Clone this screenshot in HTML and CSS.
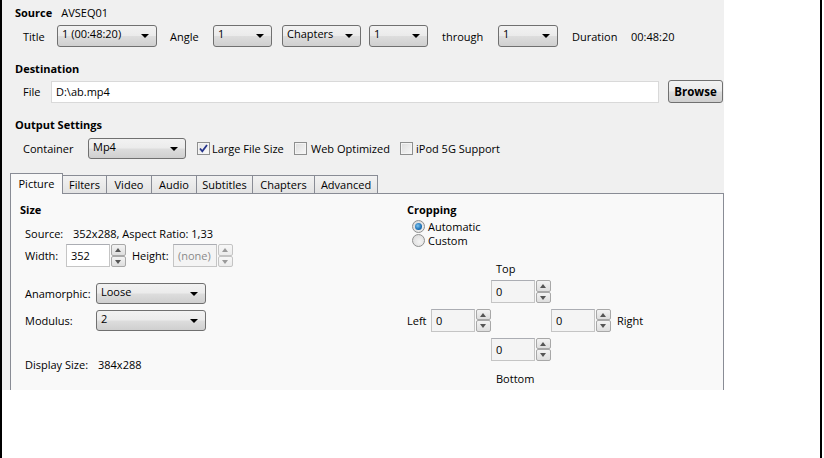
FILE: index.html
```html
<!DOCTYPE html>
<html>
<head>
<meta charset="utf-8">
<title>HandBrake</title>
<link rel="stylesheet" href="styles.css">
</head>
<body>
<div class="frame">
  <div class="edge-l"></div>
  <div class="content">
    <div class="app">
      <div class="row r-source"><span class="b">Source</span><span class="src-name">AVSEQ01</span></div>
      <div class="row r-title">
        <span class="lbl l-title">Title</span>
        <div class="combo w-title">1 (00:48:20)</div>
        <span class="lbl l-angle">Angle</span>
        <div class="combo w-angle">1</div>
        <div class="combo w-chap">Chapters</div>
        <div class="combo w-c1">1</div>
        <span class="lbl l-through">through</span>
        <div class="combo w-c2">1</div>
        <span class="lbl l-dur">Duration</span>
        <span>00:48:20</span>
      </div>
      <div class="row r-head1"><span class="b">Destination</span></div>
      <div class="row r-file">
        <span class="lbl l-file">File</span>
        <div class="textbox w-file">D:\ab.mp4</div>
        <div class="button w-browse">Browse</div>
      </div>
      <div class="row r-head2"><span class="b">Output Settings</span></div>
      <div class="row r-cont">
        <span class="lbl l-cont">Container</span>
        <div class="combo w-cont">Mp4</div>
        <span class="check checked c1"><svg viewBox="0 0 13 13" width="13" height="13"><path d="M3 6.5 L5.3 9.3 L10 3" fill="none" stroke="#26348b" stroke-width="1.8"/></svg></span>
        <span class="lbl l-lfs">Large File Size</span>
        <span class="check"></span>
        <span class="lbl l-web">Web Optimized</span>
        <span class="check"></span>
        <span class="lbl l-ipod">iPod 5G Support</span>
      </div>
      <div class="tabs">
        <div class="tab active t-pic">Picture</div>
        <div class="tab t-fil">Filters</div>
        <div class="tab t-vid">Video</div>
        <div class="tab t-aud">Audio</div>
        <div class="tab t-sub">Subtitles</div>
        <div class="tab t-chp">Chapters</div>
        <div class="tab t-adv">Advanced</div>
      </div>
      <div class="panel">
        <div class="col-size">
          <div class="b h-size">Size</div>
          <div class="p-row p-src"><span class="lbl l-src">Source:</span><span>352x288, Aspect Ratio: 1,33</span></div>
          <div class="p-row p-wh">
            <span class="lbl l-w">Width:</span>
            <div class="spin"><div class="spin-in white">352</div><div class="spin-btns"><span class="sb up"></span><span class="sb down"></span></div></div>
            <span class="lbl l-h">Height:</span>
            <div class="spin"><div class="spin-in disabled">(none)</div><div class="spin-btns dis"><span class="sb up"></span><span class="sb down"></span></div></div>
          </div>
          <div class="p-row p-ana">
            <span class="lbl l-ana">Anamorphic:</span>
            <div class="combo w-ana">Loose</div>
          </div>
          <div class="p-row p-mod">
            <span class="lbl l-ana">Modulus:</span>
            <div class="combo w-ana">2</div>
          </div>
          <div class="p-row p-disp"><span class="lbl l-disp">Display Size:</span><span>384x288</span></div>
        </div>
        <div class="col-crop">
          <div class="b h-crop">Cropping</div>
          <div class="radio-row r-auto"><span class="radio on"></span><span>Automatic</span></div>
          <div class="radio-row"><span class="radio"></span><span>Custom</span></div>
          <div class="crop-grid">
            <div class="cg-top-lbl">Top</div>
            <div class="cg-top"><div class="spin"><div class="spin-in">0</div><div class="spin-btns"><span class="sb up"></span><span class="sb down"></span></div></div></div>
            <div class="cg-left-lbl">Left</div>
            <div class="cg-left"><div class="spin"><div class="spin-in">0</div><div class="spin-btns"><span class="sb up"></span><span class="sb down"></span></div></div></div>
            <div class="cg-right"><div class="spin"><div class="spin-in">0</div><div class="spin-btns"><span class="sb up"></span><span class="sb down"></span></div></div></div>
            <div class="cg-right-lbl">Right</div>
            <div class="cg-bot"><div class="spin"><div class="spin-in">0</div><div class="spin-btns"><span class="sb up"></span><span class="sb down"></span></div></div></div>
            <div class="cg-bot-lbl">Bottom</div>
          </div>
        </div>
      </div>
    </div>
  </div>
  <div class="edge-r"></div>
</div>
</body>
</html>
```
FILE: styles.css
```css
* { box-sizing: border-box; }
html, body { margin: 0; padding: 0; background: #fff; }
body {
  font-family: "Open Sans", "Noto Sans", "Liberation Sans", sans-serif;
  font-size: 11px;
  color: #000;
  width: 824px;
  height: 458px;
  overflow: hidden;
}
.frame { display: flex; height: 458px; }
.edge-l { width: 2px; background: #000; }
.edge-r { width: 2px; background: #000; }
.content { width: 818px; background: #fff; }
.app {
  width: 722px;
  height: 390px;
  background: #f0f0f0;
  overflow: hidden;
}
.b { font-weight: 700; }
.row { display: flex; align-items: center; padding-left: 13px; white-space: nowrap; }
.lbl { display: inline-block; white-space: nowrap; }

.r-source { margin-top: 3px; height: 18px; }
.src-name { margin-left: 9px; }
.r-title { margin-top: 4px; height: 22px; }
.l-title { margin-left: 8px; width: 34px; }
.w-title { width: 100px; }
.l-angle { margin-left: 13px; width: 43px; }
.w-angle { width: 59px; }
.w-chap { margin-left: 10px; width: 79px; }
.w-c1 { margin-left: 8px; width: 59px; }
.l-through { margin-left: 14px; width: 56px; }
.w-c2 { width: 60px; }
.l-dur { margin-left: 14px; width: 59px; }

.r-head1 { margin-top: 12px; height: 18px; }
.r-file { margin-top: 3px; height: 23px; }
.l-file { margin-left: 8px; width: 28px; }
.w-file { width: 608px; }
.w-browse { margin-left: 9px; width: 55px; }
.r-head2 { margin-top: 12px; height: 18px; }
.r-cont { margin-top: 4px; height: 22px; }
.l-cont { margin-left: 8px; width: 65px; }
.w-cont { width: 98px; }
.c1 { margin-left: 11px; }
.l-lfs { margin-left: 2px; width: 82px; }
.l-web { margin-left: 4px; width: 89px; }
.l-ipod { margin-left: 3px; }

/* combo box */
.combo {
  position: relative;
  height: 22px;
  border: 1px solid #707070;
  border-radius: 3px;
  background: linear-gradient(#f2f2f2 0%, #ebebeb 48%, #dddddd 52%, #cfcfcf 100%);
  padding: 0 0 0 4px;
  line-height: 16px;
}
.combo::after {
  content: "";
  position: absolute;
  right: 7px;
  top: 8px;
  border-left: 4px solid transparent;
  border-right: 4px solid transparent;
  border-top: 4px solid #000;
}
.w-ana, .w-cont { height: 21px; }

.textbox {
  height: 22px;
  background: #fff;
  border: 1px solid #d9d9d9;
  padding-left: 4px;
  line-height: 19px;
}
.button {
  height: 23px;
  border: 1px solid #707070;
  border-radius: 3px;
  background: linear-gradient(#f2f2f2 0%, #ebebeb 48%, #dddddd 52%, #cfcfcf 100%);
  font-weight: 700;
  font-size: 11.5px;
  text-align: center;
  line-height: 21px;
}

/* checkbox */
.check {
  display: inline-block;
  width: 13px;
  height: 13px;
  border: 1px solid #8e8f8f;
  background: linear-gradient(135deg, #dcdcdc, #f8f8f8);
  box-shadow: inset 0 0 0 1px #f4f4f4;
  position: relative;
}
.check svg { position: absolute; left: -1px; top: -1px; }
.check.checked { background: linear-gradient(135deg, #e3e3e3, #fbfbfb); }

/* tabs */
.tabs {
  display: flex;
  align-items: flex-end;
  margin-left: 8px;
  margin-top: 15px;
  height: 19px;
  position: relative;
  z-index: 1;
}
.tab {
  height: 18px;
  border: 1px solid #898c95;
  border-bottom: none;
  margin-right: -1px;
  background: linear-gradient(#f2f2f2, #e3e3e3);
  text-align: center;
  line-height: 17px;
}
.tab.active {
  height: 21px;
  margin-bottom: -1px;
  background: #f9f9f9;
  line-height: 20px;
}
.t-pic { width: 53px; }
.t-fil { width: 45px; }
.t-vid { width: 46px; }
.t-aud { width: 46px; }
.t-sub { width: 57px; }
.t-chp { width: 63px; }
.t-adv { width: 64px; }

.panel {
  margin-left: 8px;
  width: 714px;
  height: 210px;
  border: 1px solid #898c95;
  background: #f9f9f9;
  display: flex;
}
.col-size { width: 396px; padding-left: 9px; }
.h-size { margin-top: 9px; height: 14px; line-height: 14px; }
.p-row { display: flex; align-items: center; padding-left: 5px; white-space: nowrap; }
.p-src { margin-top: 9px; height: 14px; }
.l-src { width: 48px; }
.p-wh { margin-top: 4px; height: 23px; }
.l-w { width: 41px; }
.l-h { margin-left: 6px; width: 41px; }
.p-ana { margin-top: 16px; height: 21px; }
.p-mod { margin-top: 6px; height: 21px; }
.l-ana { width: 71px; }
.w-ana { width: 110px; }
.p-disp { margin-top: 26px; height: 14px; }
.l-disp { width: 73px; }

/* spinner */
.spin { display: flex; height: 23px; width: 60px; }
.spin-in {
  width: 44px;
  height: 23px;
  border: 1px solid #c5c5c5;
  border-top-color: #abadb3;
  background: #f4f4f4;
  padding-left: 4px;
  line-height: 21px;
}
.spin-in.white { background: #fff; }
.spin-in.disabled { color: #8a8a8a; background: #f4f4f4; }
.spin-btns {
  margin-left: 1px;
  width: 15px;
  display: flex;
  flex-direction: column;
}
.sb {
  position: relative;
  height: 11.5px;
  border: 1px solid #a8a8a8;
  border-radius: 2px;
  background: linear-gradient(#f3f3f3, #dedede);
}
.sb::after {
  content: "";
  position: absolute;
  left: 3px;
  border-left: 3.5px solid transparent;
  border-right: 3.5px solid transparent;
}
.sb.up::after { top: 3px; border-bottom: 4px solid #555; }
.sb.down::after { top: 3px; border-top: 4px solid #555; }
.spin-btns.dis .sb { border-color: #c4c4c4; background: linear-gradient(#f7f7f7, #ececec); }
.spin-btns.dis .sb.up::after { border-bottom-color: #9a9a9a; }
.spin-btns.dis .sb.down::after { border-top-color: #9a9a9a; }

/* cropping */
.col-crop { flex: 1; }
.h-crop { margin-top: 9px; height: 14px; line-height: 14px; }
.radio-row { display: flex; align-items: center; height: 14px; padding-left: 5px; gap: 3px; }
.r-auto { margin-top: 2px; }
.radio {
  width: 13px;
  height: 13px;
  border-radius: 50%;
  border: 1px solid #8e8f8f;
  background: radial-gradient(circle at 60% 60%, #f4f4f4, #d6d6d6);
  position: relative;
}
.radio.on::after {
  content: "";
  position: absolute;
  left: 2px;
  top: 2px;
  width: 7px;
  height: 7px;
  border-radius: 50%;
  background: radial-gradient(circle at 40% 40%, #7fc5f0, #1b6fb5 60%, #0e4f8a);
}
.crop-grid {
  margin-top: 14px;
  display: grid;
  grid-template-columns: 24px 60px 60px 60px auto;
  grid-template-rows: 14px 23px 24px 24px 24px;
  row-gap: 5px;
  align-items: center;
}
.cg-top-lbl { grid-column: 3; grid-row: 1; padding-left: 5px; }
.cg-top { grid-column: 3; grid-row: 2; }
.cg-left-lbl { grid-column: 1; grid-row: 3; }
.cg-left { grid-column: 2; grid-row: 3; }
.cg-right { grid-column: 4; grid-row: 3; }
.cg-right-lbl { grid-column: 5; grid-row: 3; padding-left: 6px; }
.cg-bot { grid-column: 3; grid-row: 4; }
.cg-bot-lbl { grid-column: 3; grid-row: 5; padding-left: 5px; }
```
